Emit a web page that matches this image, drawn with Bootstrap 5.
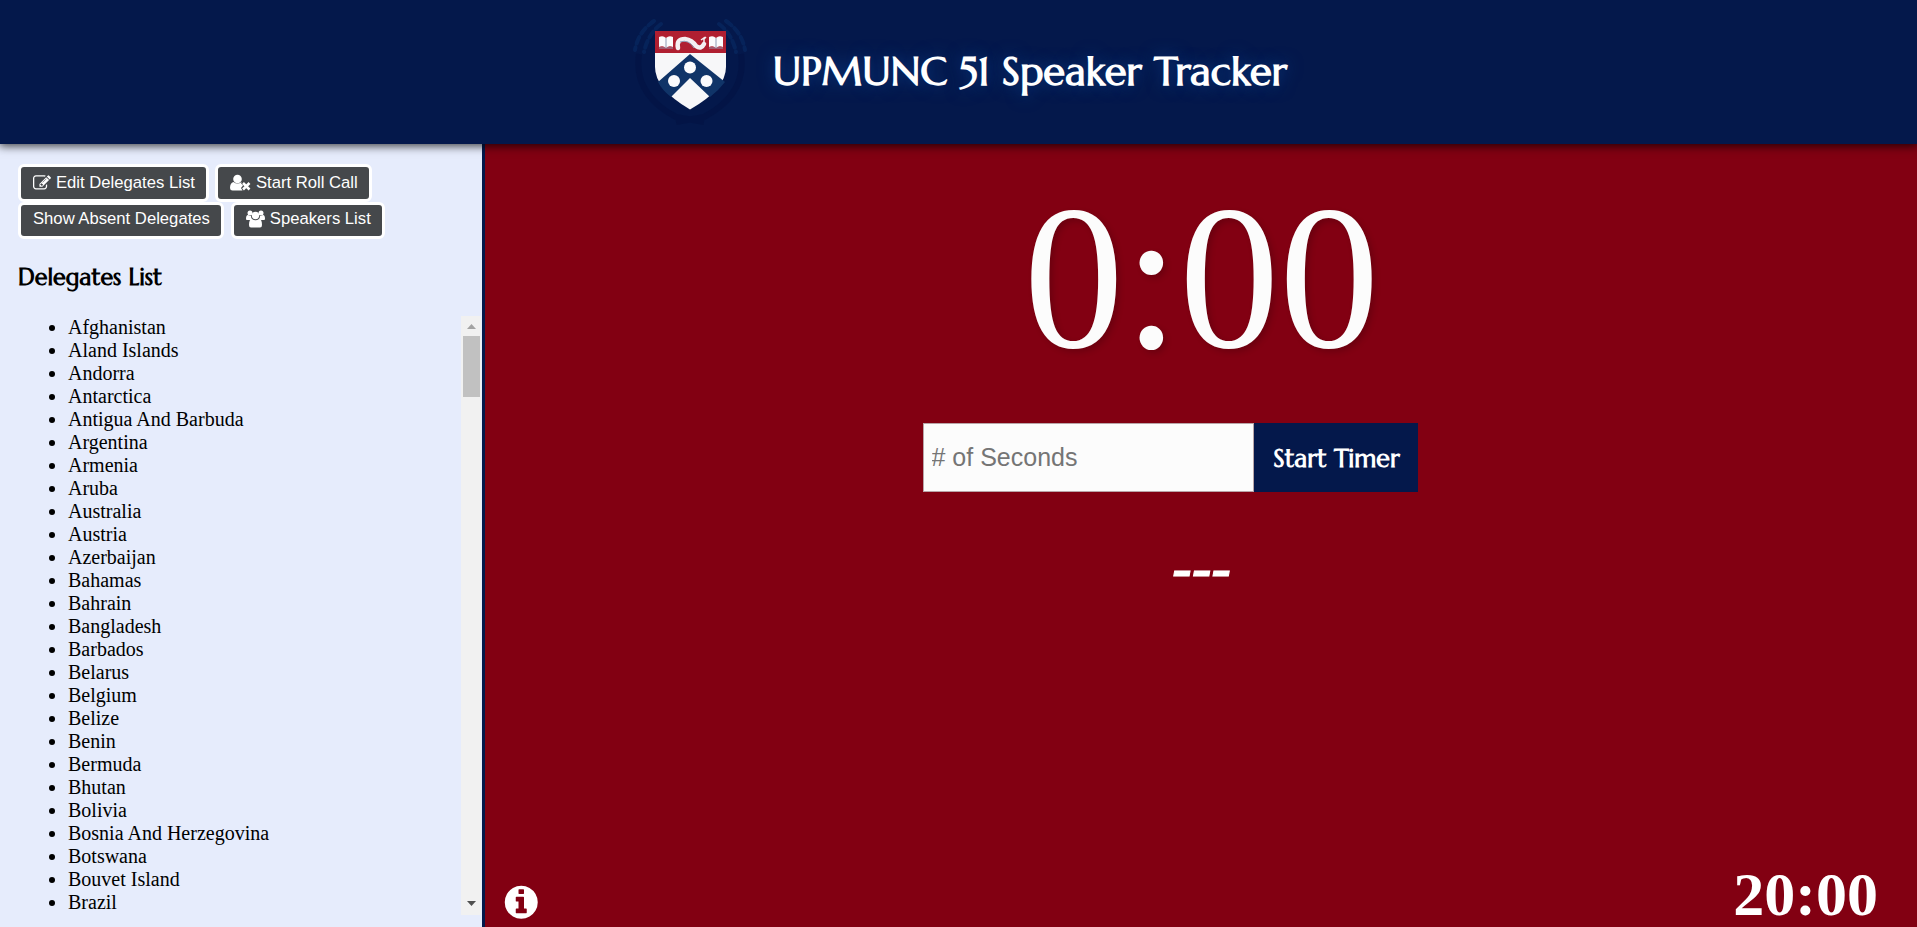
<!DOCTYPE html>
<html lang="en">
<head>
<meta charset="utf-8">
<title>UPMUNC 51 Speaker Tracker</title>
<link href="https://cdn.jsdelivr.net/npm/bootstrap@5.3.0/dist/css/bootstrap.min.css" rel="stylesheet">
<style>
  :root { --navy: #04184b; --maroon: #820012; --pale: #e6ecfc; }
  body { font-family: "Liberation Serif", serif; color: #000; background: var(--maroon); line-height: 1.15; }
  .display-face { font-family: Marcellus, Lato, sans-serif; font-weight: bold; }
  .site-head { height: 144px; background: var(--navy); box-shadow: 0 1px 9px 1px rgba(0,0,0,.75); z-index: 2; }
  .crest { width: 120px; height: 120px; margin-right: 23px; }
  .site-title { font-size: 40px; line-height: 50px; padding-bottom: 2px; text-shadow: 0 0 16px #0b3a80; }
  .side { width: 485px; background: var(--pale); border-right: 3px solid var(--navy); padding: 20px 0 12px 18px; }
  .tool-row { height: 37.5px; gap: 6px; }
  .tool { font: 16.67px/20px "Liberation Sans", sans-serif; color: #fff; background: #45484b; border: 3px solid #fff; border-radius: 6px; height: 38px; padding: 0 11px 1px 12px; }
  .tool-row + .tool-row .tool { height: 37px; padding-bottom: 2px; }
  .tool-row + .tool-row { gap: 7px; }
  .tool svg { width: 18px; height: 18px; margin-right: 5px; }
  .side-title { font-size: 23.4px; line-height: 30px; margin: 23px 0 24px; }
  .delegates { font-size: 20px; line-height: 23px; padding-left: 50px; }
  .bar { width: 20px; background: #f1f1f1; margin-right: 1px; padding: 8px 1px 9px 2px; }
  .thumb { height: 61px; background: #c1c1c1; margin-top: 7px; }
  .clock { font-size: 200px; line-height: 230px; color: #fcfcfc; margin: 21px 0 0 1px; text-shadow: 3px 3px 6px rgba(0,0,0,.18); transform: scaleY(1.03); transform-origin: 50% 185px; }
  .timer-form { margin: 28px 62px 0 0; height: 69px; }
  .secs { width: 331px; border: 1px solid #b9a5a8; border-radius: 0; background: #fcfcfc; font: 25px "Liberation Sans", sans-serif; padding: 0 8px; }
  .secs::placeholder { color: #757575; opacity: 1; }
  .go { width: 164px; border: 0; border-radius: 0; background: var(--navy); color: #fff; font-size: 25px; padding: 3px 5px 0 7px; }
  .speaker { font: italic bold 59px/60px "Liberation Serif", serif; color: #fff; margin: 45px 0 0 2px; -webkit-text-stroke: 1px #fff; }
  .total { font-size: 62px; line-height: 72px; color: #fff; margin: 0 39px -3px 0; }
  .info { width: 38.5px; height: 38.5px; margin: 0 0 6px 17px; }
</style>
</head>
<body class="vh-100 d-flex flex-column overflow-hidden">
<header class="site-head d-flex align-items-center justify-content-center flex-shrink-0 position-relative text-white">
  <svg class="crest" viewBox="0 0 120 120">
    <g fill="none" stroke="#0a2d68" stroke-width="4" stroke-linecap="round" stroke-dasharray="7 4" opacity=".55">
      <path d="M24 9Q8 20 5 38M31 12Q18 22 14 40M96 9Q112 20 115 38M89 12Q102 22 106 40"/>
    </g>
    <g fill="none" stroke="#031342" stroke-width="6" opacity=".6"><path d="M9 42Q3 82 46 105L74 110M111 42Q117 82 74 105L46 110"/></g>
    <path fill="#f7f7f9" d="M25 19H96V55Q96 77 60 97.500Q25 77 25 55Z"/>
    <path fill="#b01f31" d="M25 19H96V41H25Z"/>
    <path fill="#103468" d="M60 42L95 70Q89 78 80 85L60 66L41 85Q32 78 28 70Z"/>
    <g fill="#fbfbfd"><circle cx="60" cy="55.500" r="6"/><circle cx="44" cy="69" r="6"/><circle cx="76.500" cy="69" r="6"/>
      <path d="M29 25Q33 23 36 26Q39 23 43 25V35Q39 33 36 36Q33 33 29 35ZM79 25Q83 23 86 26Q89 23 93 25V35Q89 33 86 36Q83 33 79 35Z"/></g>
    <path fill="none" stroke="#f4eff2" stroke-width="4.500" stroke-linecap="round" d="M48 36Q46 27 55 27Q62 28 66 34Q71 38 74 32"/>
    <path fill="none" stroke="#8f9bb5" stroke-width="1" d="M36 26V35M86 26V35M50 30Q59 27 64 36M29 36H43M79 36H93"/>
    <path fill="none" stroke="#f4eff2" stroke-width="1.500" d="M74 32V26L71 28M74 27L76 25"/>
  </svg>
  <h1 class="site-title display-face mb-0">UPMUNC 51 Speaker Tracker</h1>
</header>
<div class="d-flex flex-grow-1 overflow-hidden">
  <aside class="side d-flex flex-column flex-shrink-0">
    <div class="tool-row d-flex">
      <button class="tool d-flex align-items-center"><svg viewBox="0 0 1792 1792" fill="#fff"><path d="M888 1184l116-116-152-152-116 116v56h96v96h56zm440-720q-16-16-33 1l-350 350q-17 17-1 33t33-1l350-350q17-17 1-33zm80 594v190q0 119-84.500 203.500t-203.500 84.500h-832q-119 0-203.500-84.500t-84.500-203.500v-832q0-119 84.500-203.500t203.500-84.500h832q63 0 117 25 15 7 18 23 3 17-9 29l-49 49q-14 14-32 8-23-6-45-6h-832q-66 0-113 47t-47 113v832q0 66 47 113t113 47h832q66 0 113-47t47-113v-126q0-13 9-22l64-64q15-15 35-7t20 29zm-96-738l288 288-672 672h-288v-288zm444 132l-92 92-288-288 92-92q28-28 68-28t68 28l152 152q28 28 28 68t-28 68z"/></svg>Edit Delegates List</button>
      <button class="tool d-flex align-items-center"><svg style="width:21px" viewBox="0 0 21 18" fill="#fff"><circle cx="7.500" cy="5" r="4.300"/><path d="M3.500 8Q0 9 0 14Q.100 16.500 2.500 16.500H12.500L11 14L13 11.500L11.200 9.500L11.500 8Q7.500 11 3.500 8Z"/><path d="M13 9L19.500 15.500M19.500 9L13 15.500" stroke="#fff" stroke-width="2.600"/></svg>Start Roll Call</button>
    </div>
    <div class="tool-row d-flex">
      <button class="tool">Show Absent Delegates</button>
      <button class="tool d-flex align-items-center"><svg style="width:19px" viewBox="0 0 19 18" fill="#fff"><circle cx="4" cy="3" r="2.500"/><circle cx="15" cy="3" r="2.500"/><circle cx="9.500" cy="5.500" r="3.700"/><path d="M0 9Q0 5 2 5Q4 6 5 6Q5 8 6 9L4 10H1Q0 10 0 9ZM19 9Q19 5 17 5Q15 6 14 6Q14 8 13 9L15 10H18Q19 10 19 9ZM3 15Q3 9 6 9Q9.500 11.500 13 9Q16 9 16 15Q16 17.500 14 17.500H5Q3 17.500 3 15Z"/></svg>Speakers List</button>
    </div>
    <h2 class="side-title display-face">Delegates List</h2>
    <div class="d-flex flex-grow-1 overflow-hidden">
      <ul class="delegates flex-grow-1 mb-0" id="delegates"></ul>
      <div class="bar d-flex flex-column">
        <svg width="17" height="5" viewBox="0 0 17 5"><path d="M4 5L8.500 0L13 5Z" fill="#a3a3a3"/></svg>
        <div class="thumb"></div>
        <svg class="mt-auto" width="17" height="5" viewBox="0 0 17 5"><path d="M4 0L8.500 5L13 0Z" fill="#505050"/></svg>
      </div>
    </div>
  </aside>
  <main class="flex-grow-1 d-flex flex-column align-items-center">
    <div class="clock">0:00</div>
    <div class="timer-form d-flex">
      <input class="secs" placeholder="# of Seconds">
      <button class="go display-face">Start Timer</button>
    </div>
    <div class="speaker">---</div>
    <div class="mt-auto w-100 d-flex justify-content-between align-items-end">
      <svg class="info" viewBox="0 0 1792 1792" fill="#fff"><path d="M1152 1376v-160q0-14-9-23t-23-9h-96v-512q0-14-9-23t-23-9h-320q-14 0-23 9t-9 23v160q0 14 9 23t23 9h96v320h-96q-14 0-23 9t-9 23v160q0 14 9 23t23 9h448q14 0 23-9t9-23zm-128-896v-160q0-14-9-23t-23-9h-192q-14 0-23 9t-9 23v160q0 14 9 23t23 9h192q14 0 23-9t9-23zm640 416q0 209-103 385.500t-279.500 279.500-385.500 103-385.500-103-279.500-279.500-103-385.500 103-385.500 279.500-279.500 385.500-103 385.500 103 279.500 279.500 103 385.500z"/></svg>
      <div class="total fw-bold">20:00</div>
    </div>
  </main>
</div>
<script src="https://cdn.jsdelivr.net/npm/bootstrap@5.3.0/dist/js/bootstrap.bundle.min.js"></script>
<script>
  const names = ["Afghanistan","Aland Islands","Andorra","Antarctica","Antigua And Barbuda","Argentina","Armenia","Aruba","Australia","Austria","Azerbaijan","Bahamas","Bahrain","Bangladesh","Barbados","Belarus","Belgium","Belize","Benin","Bermuda","Bhutan","Bolivia","Bosnia And Herzegovina","Botswana","Bouvet Island","Brazil"];
  const list = document.getElementById("delegates");
  for (const name of names) {
    const item = document.createElement("li");
    item.textContent = name;
    list.append(item);
  }
</script>
</body>
</html>
